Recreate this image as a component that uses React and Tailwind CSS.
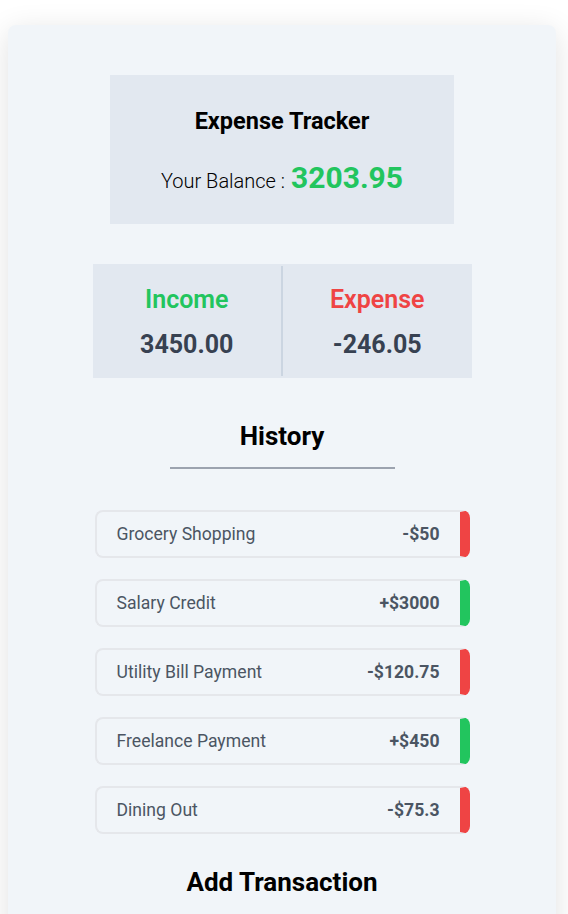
import React from "react";

const transactions = [
  { id: 1, text: "Grocery Shopping", amount: -50 },
  { id: 2, text: "Salary Credit", amount: 3000 },
  { id: 3, text: "Utility Bill Payment", amount: -120.75 },
  { id: 4, text: "Freelance Payment", amount: 450 },
  { id: 5, text: "Dining Out", amount: -75.3 },
];

function TransactionItem({ item }) {
  const positive = item.amount > 0;
  return (
    <li
      className={`flex h-[48px] items-center justify-between rounded-lg border-2 border-[#e5e7eb] pl-5 pr-5 border-r-[10px] ${
        positive ? "border-r-[#22c55e]" : "border-r-[#ef4444]"
      }`}
    >
      <span className="text-[17.6px] text-[#4b5563]">{item.text}</span>
      <span className="text-[17.6px] font-bold text-[#4b5563]">
        {positive ? "+" : "-"}${Math.abs(item.amount)}
      </span>
    </li>
  );
}

export default function App() {
  return (
    <div
      className="min-h-screen bg-white pt-[25px]"
      style={{ fontFamily: "Roboto, 'Noto Sans', sans-serif" }}
    >
      <div className="ml-2 flex w-[548px] flex-col items-center rounded-lg bg-[#f1f5f9] pb-10 pt-[50px] shadow-[0_6px_30px_rgba(0,0,0,0.12)]">
        <div className="flex h-[149px] w-[344px] flex-col items-center bg-[#e2e8f0]">
          <h1 className="mt-[32px] text-[23.5px] font-bold leading-[28px] text-black">
            Expense Tracker
          </h1>
          <div className="mt-[20px] flex items-baseline text-black">
            <span className="text-[20px] font-light">Your Balance :</span>
            <span className="ml-[6px] text-[30px] font-bold text-[#22c55e]">3203.95</span>
          </div>
        </div>

        <div className="mt-10 flex h-[114px] w-[379px] bg-[#e2e8f0]">
          <div className="flex flex-1 flex-col items-center pt-[21px]">
            <span className="text-[25px] font-semibold leading-[30px] text-[#22c55e]">Income</span>
            <span className="mt-[15px] text-[25px] font-bold leading-[30px] text-[#374151]">3450.00</span>
          </div>
          <div className="my-[2px] w-[2px] bg-[#cbd5e1]" />
          <div className="flex flex-1 flex-col items-center pt-[21px]">
            <span className="text-[25px] font-semibold leading-[30px] text-[#ef4444]">Expense</span>
            <span className="mt-[15px] text-[25px] font-bold leading-[30px] text-[#374151]">-246.05</span>
          </div>
        </div>

        <h2 className="mt-[42px] text-[26px] font-bold leading-[32px] text-black">History</h2>
        <div className="mt-[15px] h-[2px] w-[225px] bg-[#9ca3af]" />

        <ul className="mt-[41px] flex w-[375px] flex-col gap-[21px]">
          {transactions.map((t) => (
            <TransactionItem key={t.id} item={t} />
          ))}
        </ul>

        <h2 className="mt-[32px] text-[26px] font-bold leading-[32px] text-black">Add Transaction</h2>
        <div className="h-[200px]" />
      </div>
    </div>
  );
}
